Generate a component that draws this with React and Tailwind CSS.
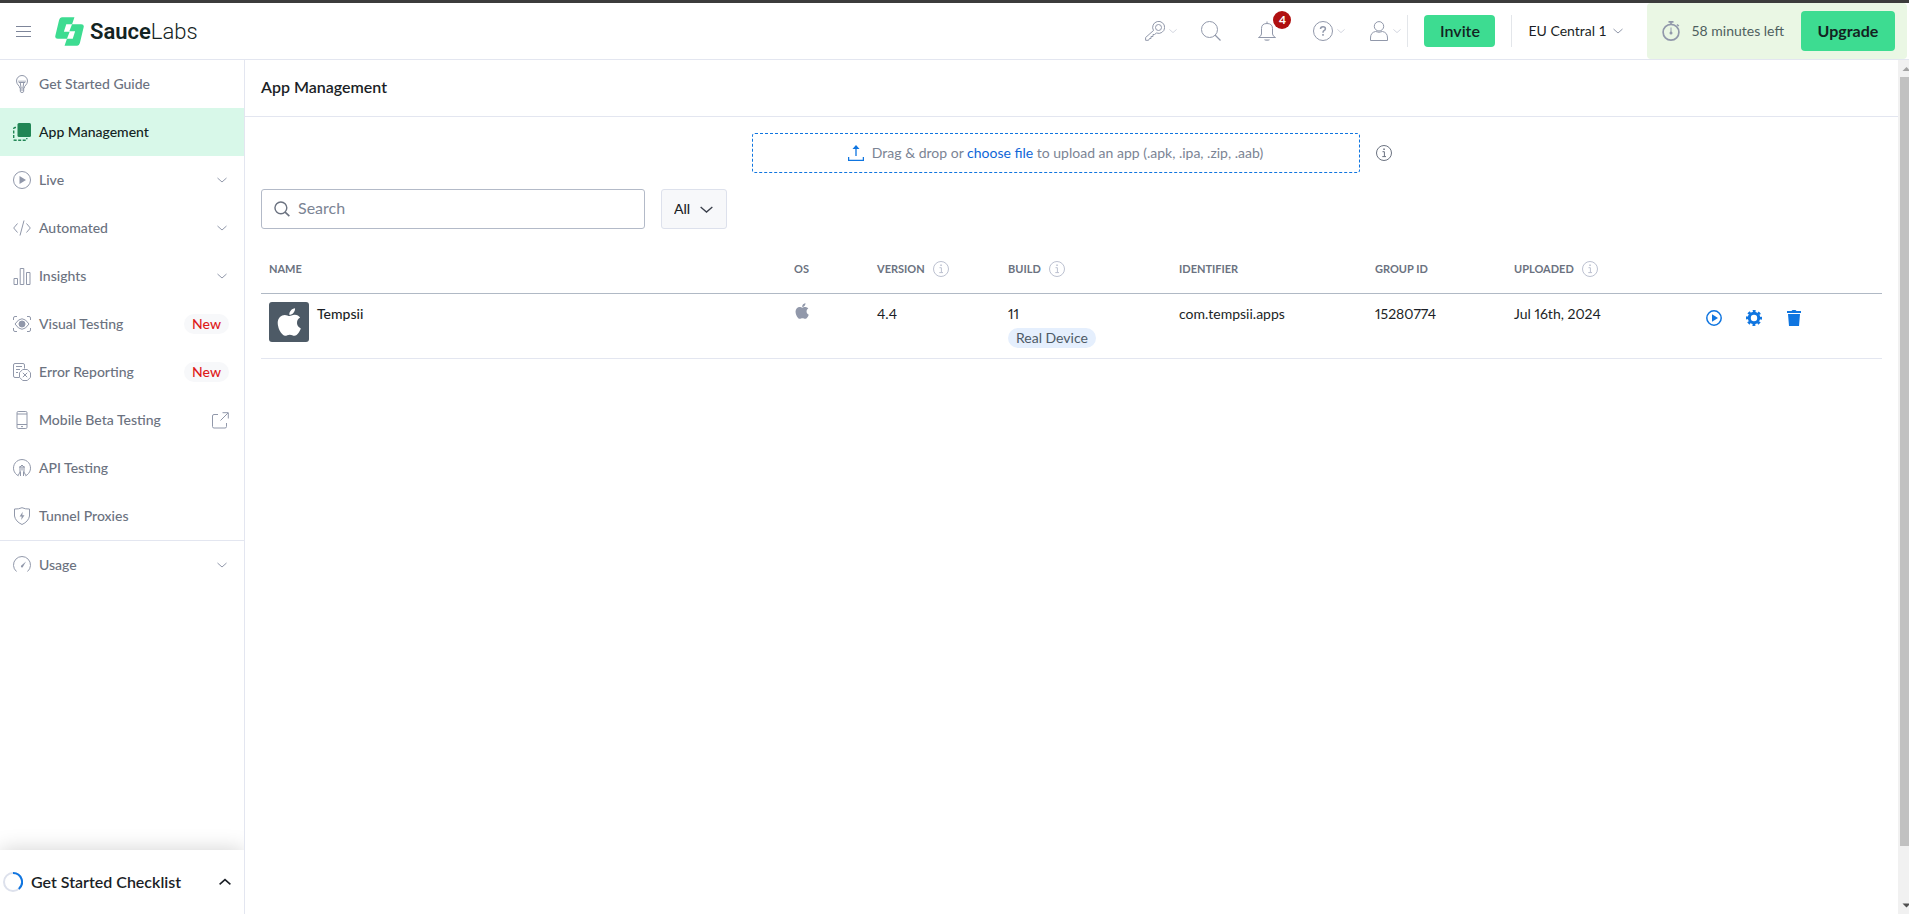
// src/App.jsx
import React from "react";

const Svg = ({ size = 18, box = 18, className = "", children }) => (
  <svg
    width={size}
    height={size}
    viewBox={`0 0 ${box} ${box}`}
    fill="none"
    stroke="currentColor"
    aria-hidden="true"
    className={"shrink-0 " + className}
  >
    {children}
  </svg>
);

const APPLE_PATH =
  "M318.7 268.7c-.2-36.7 16.4-64.4 50-84.8-18.8-26.9-47.2-41.7-84.7-44.6-35.5-2.8-74.3 20.7-88.5 20.7-15 0-49.4-19.7-76.4-19.7C63.3 141.2 4 184.8 4 273.5q0 39.3 14.4 81.2c12.8 36.7 59 126.7 107.2 125.2 25.2-.6 43-17.9 75.8-17.9 31.8 0 48.3 17.9 76.4 17.9 48.6-.7 90.4-82.5 102.6-119.3-65.2-30.7-61.7-90-61.7-91.9zm-56.6-164.2c27.3-32.4 24.8-61.9 24-72.5-24.1 1.4-52 16.4-67.9 34.9-17.5 19.8-27.8 44.3-25.6 71.9 26.1 2 49.9-11.4 69.5-34.3z";

const Apple = ({ className }) => (
  <svg viewBox="0 28 376 456" fill="currentColor" aria-hidden="true" className={className}>
    <path d={APPLE_PATH} />
  </svg>
);

const Logo = () => (
  <svg width="29" height="29" viewBox="0 0 85 85" fill="#3ddc91" aria-hidden="true" className="shrink-0">
    <path d="M20 1H57L50 21H33L26 43H43L35 64H8Q-1 64 1 55L12 9Q14 1 20 1Z" />
    <path d="M65 84H28L35 64H52L59 42H42L50 21H77Q86 21 84 30L73 76Q71 84 65 84Z" />
  </svg>
);

const Chevron = ({ size = 10, className = "", width = 1 }) => (
  <svg
    width={size}
    height={size}
    viewBox="0 0 10 10"
    fill="none"
    stroke="currentColor"
    strokeWidth={width}
    aria-hidden="true"
    className={"shrink-0 " + className}
  >
    <path d="M.5 3 5 7 9.500 3" />
  </svg>
);

const InfoIcon = ({ className = "" }) => (
  <Svg size={16} box={16} className={className}>
    <circle cx="8" cy="8" r="7.500" />
    <path d="M6.500 6.700H8.400V11.600M6.300 11.600H10" />
    <path d="M7.300 4.300H8.800" strokeWidth="1.500" />
  </Svg>
);

const BulbIcon = () => (
  <Svg>
    <path d="M6.800 13C6.800 10.500 3.500 9.800 3.500 6A5.500 5.500 0 0 1 14.500 6C14.500 9.800 11.200 10.500 11.200 13Z" />
    <path d="M7.300 13V16.200Q7.300 17.500 9 17.500 10.700 17.500 10.700 16.200V13M7.300 15H10.700" />
    <path d="M8 12.500 7.300 8M10 12.500 10.700 8M6 5.500V7.500H12V5.500M8 5.500V7.500M10 5.500V7.500" />
  </Svg>
);

const AppIcon = () => (
  <Svg>
    <rect x="4.500" y="0" width="13.500" height="14" rx="1.500" fill="currentColor" stroke="none" />
    <path d="M3 4.500H2Q.7 4.500.7 6V16Q.7 17.300 2 17.300H12.500Q13.800 17.300 13.800 16V15" strokeWidth="1.400" strokeDasharray="3 1.500" />
  </Svg>
);

const LiveIcon = () => (
  <Svg>
    <circle cx="9" cy="9" r="8.500" />
    <path d="M6.500 5V13L13 9Z" fill="currentColor" stroke="none" />
  </Svg>
);

const CodeIcon = () => (
  <Svg>
    <path d="M4.500 4.500.7 9 4.500 13.500M13.500 4.500 17.300 9 13.500 13.500M11 1.500 7 16.500" />
  </Svg>
);

const BarsIcon = () => (
  <Svg>
    <path d="M1 11.500H4.500V17.500H1ZM7.200 1.500H10.800V17.500H7.200ZM13.500 5.500H17V17.500H13.500Z" />
  </Svg>
);

const EyeIcon = () => (
  <Svg>
    <path d="M.5 5V3Q.5 1.500 2 1.500H4M14 1.500H16Q17.500 1.500 17.500 3V5M17.500 13V15Q17.500 16.500 16 16.500H14M4 16.500H2Q.5 16.500.5 15V13" />
    <path d="M2 9Q9-1.500 16 9 9 19.500 2 9Z" />
    <circle cx="9" cy="9" r="3" fill="currentColor" />
  </Svg>
);

const ErrorIcon = () => (
  <Svg>
    <path d="M6 14.500H2Q.5 14.500.5 13V2Q.5.5 2 .5H10Q11.500.5 11.500 2V5.500M3 3.500H9M3 6.500H7M3 9.500H5" />
    <path d="M9.700 6.500H14.300L17.500 9.700V14.300L14.300 17.500H9.700L6.500 14.300V9.700Z" />
    <path d="M9.800 9.800 14.200 14.200M14.200 9.800 9.800 14.200" />
  </Svg>
);

const PhoneIcon = () => (
  <Svg>
    <rect x="4" y=".5" width="10" height="17" rx="1.200" />
    <path d="M4 3H14M4 13.500H14M8 15.600H10" />
  </Svg>
);

const ApiIcon = () => (
  <Svg>
    <path d="M5.500 16.800A8.500 8.500 0 1 1 12.500 16.800" />
    <path d="M5.200 16.500 7 13V8L9 6 11 8V13L12.800 16.500M7.500 17V12.500M10.500 17V12.500M9 8.500V11.500M6 8H12" />
  </Svg>
);

const ShieldIcon = () => (
  <Svg>
    <path d="M9 .7Q5.500 2.300 1.500 2V9Q2.500 14.500 9 17.500 15.500 14.500 16.500 9V2Q12.500 2.300 9 .7Z" />
    <path d="M9.700 4.800 6.600 9.500H8.700L8.200 13 11.500 8.200H9.300Z" fill="currentColor" stroke="none" />
  </Svg>
);

const GaugeIcon = () => (
  <Svg>
    <path d="M3.500 15.500A8.500 8.500 0 1 1 14.500 15.500" />
    <path d="M13 5.500 8 9.800A1.200 1.200 0 0 0 9.700 11.300Z" fill="currentColor" stroke="none" />
  </Svg>
);

const ExternalIcon = () => (
  <Svg size={17} box={17} className="text-[#9198aa]">
    <path d="M6 2.500H2Q.5 2.500 .5 4V14.500Q.5 16 2 16H13Q14.500 16 14.500 14.500V11M10.500.7H16.300V6.500M16 1 8.500 8.500" />
  </Svg>
);

const NAV_ITEMS = [
  { label: "Get Started Guide", icon: BulbIcon },
  { label: "App Management", icon: AppIcon, active: true },
  { label: "Live", icon: LiveIcon, expandable: true },
  { label: "Automated", icon: CodeIcon, expandable: true },
  { label: "Insights", icon: BarsIcon, expandable: true },
  { label: "Visual Testing", icon: EyeIcon, isNew: true },
  { label: "Error Reporting", icon: ErrorIcon, isNew: true },
  { label: "Mobile Beta Testing", icon: PhoneIcon, external: true },
  { label: "API Testing", icon: ApiIcon },
  { label: "Tunnel Proxies", icon: ShieldIcon },
];

const NavItem = ({ label, icon: Icon, active, expandable, isNew, external }) => (
  <a
    href="#"
    aria-current={active ? "page" : undefined}
    className={
      "flex h-12 items-center pl-[13px] pr-[15px] text-sm font-medium " +
      (active ? "bg-[#d8f8e9] text-[#132322]" : "text-[#6b7280]")
    }
  >
    <span className={active ? "text-[#218655]" : "text-[#9198aa]"}>
      <Icon />
    </span>
    <span className="ml-2 flex-1">{label}</span>
    {expandable && <Chevron className="mr-[2px] text-[#9198aa]" />}
    {isNew && (
      <span className="rounded-full bg-[#f7f8fa] px-2 text-[#de1b1b]">New</span>
    )}
    {external && <ExternalIcon />}
  </a>
);

const Sidebar = () => (
  <aside className="flex w-[245px] shrink-0 flex-col border-r border-[#e3e6f0]">
    <nav className="flex-1 overflow-hidden">
      {NAV_ITEMS.map((item) => (
        <NavItem key={item.label} {...item} />
      ))}
      <div className="border-t border-[#e3e6f0]">
        <NavItem label="Usage" icon={GaugeIcon} expandable />
      </div>
    </nav>
    <button className="flex h-16 items-center bg-white pl-[3px] pr-[13px] text-left text-base font-semibold text-[#1b1f26] shadow-[0_0_20px_rgba(0,0,0,0.18)] [clip-path:inset(-24px_0_0_0)]">
      <Svg size={20} box={20}>
        <circle cx="10" cy="10" r="9" stroke="#dde1ec" strokeWidth="2" />
        <path d="M10 1A9 9 0 0 1 15.800 16.900" stroke="#0f75e0" strokeWidth="2" />
      </Svg>
      <span className="ml-2 flex-1">Get Started Checklist</span>
      <Chevron size={12} width={1.3} className="rotate-180" />
    </button>
  </aside>
);

const IconButton = ({ label, menu, className = "", children }) => (
  <button aria-label={label} className={"relative flex items-center text-[#9198aa] " + className}>
    {children}
    {menu && <Chevron size={8} className="ml-1 text-[#c9cdd8]" />}
  </button>
);

const Header = () => (
  <header className="flex h-[60px] shrink-0 items-center border-t-[3px] border-b border-t-[#3c3c3c] border-b-[#e3e6f0] pl-4">
    <button aria-label="Toggle menu" className="text-[#7d8599]">
      <Svg size={15} box={15}>
        <path d="M0 2.500H15M0 7.500H15M0 12.500H15" />
      </Svg>
    </button>
    <a href="#" className="ml-6 flex items-center text-[#132322]">
      <Logo />
      <span className="ml-[6px] font-[family-name:Roboto] text-[22px] font-light">
        <span className="font-semibold">Sauce</span>Labs
      </span>
    </a>

    <div className="ml-auto flex h-full items-center">
      <IconButton label="Access keys" menu className="mr-6">
        <Svg size={20} box={20}>
          <path d="M8.500 9.500A6 6 0 1 1 11.500 12L9.500 13.500H8V15.500H6V17.500H4.500L3.500 19.300H.6V16.500Z" />
          <circle cx="13.500" cy="6.500" r="3" />
        </Svg>
      </IconButton>
      <IconButton label="Search" className="mr-9">
        <Svg size={20} box={20}>
          <circle cx="8.500" cy="8.500" r="8" />
          <path d="M14 14 19.500 19.500" strokeWidth="1.300" />
        </Svg>
      </IconButton>
      <IconButton label="Notifications" className="mr-9">
        <Svg size={20} box={20}>
          <path d="M1.500 16.500H18.500Q16 15.500 15.500 13V7.500Q15.500 2.500 10 2.500 4.500 2.500 4.500 7.500V13Q4 15.500 1.500 16.500ZM10 .5V2.500" />
          <path d="M7 18.500H13Q12.500 19.800 10 19.800 7.500 19.800 7 18.500Z" fill="currentColor" stroke="none" />
        </Svg>
        <span className="absolute -top-[10px] left-4 flex size-[18px] items-center justify-center rounded-full bg-[#b01010] text-xs font-bold text-white">
          4
        </span>
      </IconButton>
      <IconButton label="Help" menu className="mr-6">
        <Svg size={20} box={20}>
          <circle cx="10" cy="10" r="9.500" />
          <path d="M7.500 8Q7.500 5.700 10 5.700 12.400 5.700 12.400 7.700 12.400 9 11 9.700 10 10.300 10 11.800" strokeWidth="1.500" />
          <path d="M10 13V14.800" strokeWidth="1.600" />
        </Svg>
      </IconButton>
      <IconButton label="Account" menu className="mr-[6px]">
        <Svg size={20} box={20}>
          <circle cx="10" cy="5.300" r="4.700" />
          <path d="M1.500 19.500V17Q1.500 11.500 6.500 10.500 10 12 13.500 10.500 18.500 11.500 18.500 17V19.500Z" />
        </Svg>
      </IconButton>
      <div className="flex h-8 items-center border-x border-[#e3e6ea] px-4">
        <button className="h-8 w-[71px] rounded-sm bg-[#3ddc91] text-base font-semibold text-[#132322]">
          Invite
        </button>
      </div>
      <div className="relative ml-4 mr-6 flex items-center">
        <select
          aria-label="Data center"
          className="appearance-none pr-4 text-sm text-[#1b1f26]"
        >
          <option>EU Central 1</option>
        </select>
        <Chevron className="pointer-events-none absolute right-0 text-[#9198aa]" />
      </div>
      <div className="mr-[2px] flex h-14 items-center rounded-sm bg-[#eaf7e4] pl-[14px] pr-3">
        <Svg size={20} box={20} className="text-[#9198aa]">
          <circle cx="10" cy="11.200" r="7.900" strokeWidth="1.700" />
          <path d="M7.500.9H12.500M10 1V3M16 3.500 17.800 5" strokeWidth="1.600" />
          <path d="M10 6.500V12" />
          <circle cx="10" cy="12" r="1.500" fill="currentColor" stroke="none" />
        </Svg>
        <span className="ml-[10px] text-sm text-[#4f5f5f]">58 minutes left</span>
        <button className="ml-[17px] h-10 w-[94px] rounded-sm bg-[#3ddc91] text-base font-bold text-[#132322]">
          Upgrade
        </button>
      </div>
    </div>
  </header>
);

const UploadBar = () => (
  <div className="flex items-center justify-center gap-4">
    <div className="flex h-10 w-[608px] items-center justify-center rounded-[3px] border border-dashed border-[#0f75e0] text-sm text-[#7b8494]">
      <Svg size={16} box={16} className="mr-2 text-[#0f75e0]">
        <path d="M.6 12V15.300H15.400V12M8 11V2" strokeWidth="1.300" />
        <path d="M8 0 11.500 4H4.500Z" fill="currentColor" stroke="none" />
      </Svg>
      <p>
        Drag &amp; drop or{" "}
        <a href="#" className="text-[#0f66d8]">
          choose file
        </a>{" "}
        to upload an app (.apk, .ipa, .zip, .aab)
      </p>
    </div>
    <InfoIcon className="text-[#6b7280]" />
  </div>
);

const Filters = () => (
  <div className="mt-4 flex gap-4">
    <label className="flex h-10 w-96 items-center rounded-[3px] border border-[#b3bac8] px-3 text-[#6b7280]">
      <Svg size={16} box={17}>
        <circle cx="7.300" cy="7.300" r="6.300" strokeWidth="1.500" />
        <path d="M11.800 11.800 16.300 16" strokeWidth="1.700" />
      </Svg>
      <input
        type="text"
        aria-label="Search apps"
        placeholder="Search"
        className="ml-2 min-w-0 flex-1 pb-[2px] text-base outline-none placeholder:text-[#7b8494]"
      />
    </label>
    <div className="relative flex items-center">
      <select
        aria-label="Filter by platform"
        className="h-10 w-[66px] appearance-none rounded-[3px] border border-[#dde1ec] bg-[#f7f8fa] pl-3 text-sm font-medium text-[#1b1f26]"
      >
        <option>All</option>
      </select>
      <Chevron size={13} className="pointer-events-none absolute right-[14px] text-[#3a3f4a]" />
    </div>
  </div>
);

const COLUMNS = [
  { label: "NAME", width: "w-auto" },
  { label: "OS", width: "w-[83px]" },
  { label: "VERSION", width: "w-[131px]", info: true },
  { label: "BUILD", width: "w-[171px]", info: true },
  { label: "IDENTIFIER", width: "w-[196px]" },
  { label: "GROUP ID", width: "w-[139px]" },
  { label: "UPLOADED", width: "w-[192px]", info: true },
];

const AppTable = () => (
  <table className="mt-4 w-full table-fixed border-separate border-spacing-0 text-left text-sm proportional-nums text-[#1b1f26]">
    <thead>
      <tr className="h-[49px] text-[11px] text-[#6b7280]">
        {COLUMNS.map(({ label, width, info }) => (
          <th key={label} scope="col" className={"border-b border-[#b0b9c5] px-2 font-bold " + width}>
            <span className="flex items-center gap-2">
              {label}
              {info && <InfoIcon className="text-[#bcc1d0]" />}
            </span>
          </th>
        ))}
        <th scope="col" aria-label="Actions" className="w-[184px] border-b border-[#b0b9c5]" />
      </tr>
    </thead>
    <tbody>
      <tr className="h-[65px] align-top *:border-b *:border-[#e3e6f0] *:px-2">
        <td className="pt-2">
          <div className="flex gap-2">
            <span className="flex size-10 items-center justify-center rounded-[3px] bg-[#4d5a66] text-white">
              <Apple className="h-7 w-6" />
            </span>
            <span className="pt-[2px] font-medium">Tempsii</span>
          </div>
        </td>
        <td className="pt-[9px]">
          <Apple className="h-4 w-4 text-[#9198aa]" />
        </td>
        <td className="pt-[10px]">4.4</td>
        <td className="pt-[10px]">
          <p>11</p>
          <span className="mt-1 inline-block rounded-full bg-[#e5effd] px-2 text-[#4d5a66]">
            Real Device
          </span>
        </td>
        <td className="pt-[10px]">com.tempsii.apps</td>
        <td className="pt-[10px]">15280774</td>
        <td className="pt-[10px]">Jul 16th, 2024</td>
        <td className="pt-4">
          <div className="flex gap-6 text-[#0f75e0]">
            <button aria-label="Start session">
              <Svg size={16} box={16}>
                <circle cx="8" cy="8" r="7.200" strokeWidth="1.500" />
                <path d="M6 4.300V11.700L12 8Z" fill="currentColor" stroke="none" />
              </Svg>
            </button>
            <button aria-label="Settings">
              <Svg size={16} box={16}>
                <circle cx="8" cy="8" r="4.700" strokeWidth="3" />
                <circle cx="8" cy="8" r="6.900" strokeWidth="2.200" strokeDasharray="2.900 2.519" strokeDashoffset="1.450" />
              </Svg>
            </button>
            <button aria-label="Delete">
              <Svg size={16} box={16}>
                <path d="M1 1H5.500L6.500 0H9.500L10.500 1H15V3H1ZM2 4H14L13 16H3Z" fill="currentColor" stroke="none" />
              </Svg>
            </button>
          </div>
        </td>
      </tr>
    </tbody>
  </table>
);

const ScrollTrack = () => (
  <div className="w-[11px] shrink-0 overflow-hidden bg-[#f1f1f1]" aria-hidden="true">
    <div className="flex h-full w-[17px] flex-col items-center">
      <svg width="17" height="17" viewBox="0 0 17 17" fill="#a3a3a3" className="shrink-0">
        <path d="M8.500 7 12.500 11H4.500Z" />
      </svg>
      <div className="min-h-0 w-[13px] flex-[15] bg-[#c1c1c1]" />
      <div className="flex-1" />
      <svg width="17" height="17" viewBox="0 0 17 17" fill="#505050" className="shrink-0">
        <path d="M8.500 10.500 12.500 6.500H4.500Z" />
      </svg>
    </div>
  </div>
);

const App = () => {
  return (
    <div className="flex h-screen flex-col overflow-hidden bg-white font-[Lato,sans-serif]">
      <Header />
      <div className="flex min-h-0 flex-1">
        <Sidebar />
        <main className="min-w-0 flex-1">
          <h1 className="flex h-[57px] items-center border-b border-[#e3e6f0] px-4 pb-[2px] text-base font-semibold text-[#1b1f26]">
            App Management
          </h1>
          <div className="p-4">
            <UploadBar />
            <Filters />
            <AppTable />
          </div>
        </main>
        <ScrollTrack />
      </div>
    </div>
  );
};

export default App;
